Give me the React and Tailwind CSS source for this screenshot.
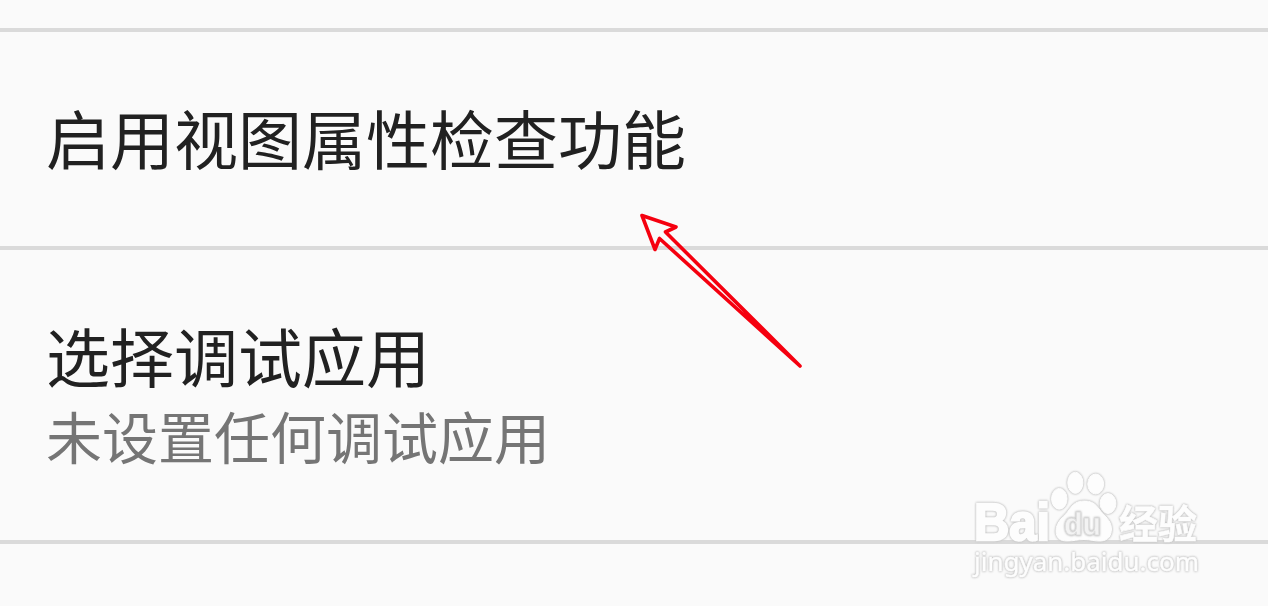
function PreferenceItem({ title, summary, className }) {
  return (
    <div className={`border-b-4 border-[#dadada] pl-[46px] ${className}`}>
      <div className="text-[64px] leading-[80px] text-[#212121]">{title}</div>
      {summary && (
        <div className="mt-px text-[56px] leading-[80px] text-[#757575]">{summary}</div>
      )}
    </div>
  )
}

// red hand-drawn style pointer
function Arrow() {
  return (
    <svg
      className="absolute left-[630px] top-[205px]"
      width="180"
      height="170"
      viewBox="630 205 180 170"
      fill="none"
      stroke="#f5000f"
      strokeWidth="3.6"
      strokeLinejoin="round"
    >
      <path d="M642 215.5L676 227L665.5 232L800 366L659.5 238.5L655 249.5Z" />
    </svg>
  )
}

// white glyphs, each with its own soft grey rim
function Watermark() {
  return (
    <svg
      className="absolute left-[960px] top-[460px] *:[filter:drop-shadow(0_0_0.8px_#b4b4b4)_drop-shadow(0_0_0.5px_#ddd)]"
      width="250"
      height="130"
      viewBox="960 460 250 130"
      fill="#fdfdfd"
      stroke="#fdfdfd"
      strokeLinejoin="miter"
    >
      <text x="974" y="540" strokeWidth="2.4" textLength="76" lengthAdjust="spacingAndGlyphs" className="font-['Liberation_Sans'] text-[52px] leading-none font-bold">
        Bai
      </text>
      <ellipse cx="1059.3" cy="498.8" rx="7.8" ry="10.4" />
      <ellipse cx="1075.3" cy="482.8" rx="7.6" ry="10.6" />
      <ellipse cx="1095.7" cy="484" rx="8" ry="10" />
      <ellipse cx="1108" cy="503.5" rx="8" ry="10" />
      <path d="M1084 501C1077 501 1073 504 1069 510C1065 516 1056 521 1056 531C1056 538 1060 541 1067 541C1074 541 1077 539.500 1084 539.500C1091 539.500 1095 541.500 1101 541C1108 540.500 1111.500 536 1111.500 529C1111.500 520 1104 516 1099 509C1095 503 1091 501 1084 501Z" />
      <text x="1064" y="535" fill="#f3f3f3" stroke="#dedede" strokeWidth="1" textLength="37" lengthAdjust="spacingAndGlyphs" className="font-['Liberation_Sans'] text-[31px] font-bold">
        du
      </text>
      <text x="1119" y="537.5" strokeWidth="0.6" textLength="78" lengthAdjust="spacingAndGlyphs" className="font-['Noto_Sans_CJK_SC',sans-serif] text-[39px] font-bold">
        经验
      </text>
      <text x="974" y="571" strokeWidth="0.5" textLength="225" lengthAdjust="spacingAndGlyphs" className="font-['Noto_Sans'] text-[26px]">
        jingyan.baidu.com
      </text>
    </svg>
  )
}

export default function App() {
  return (
    <div className="relative h-[606px] w-[1268px] overflow-hidden bg-[#fafafa] font-['Noto_Sans_CJK_SC',sans-serif]">
      <div className="h-8 border-b-4 border-[#dadada]" />
      <PreferenceItem title="启用视图属性检查功能" className="h-[218px] pt-[64px]" />
      <PreferenceItem
        title="选择调试应用"
        summary="未设置任何调试应用"
        className="h-[294px] pt-[64px]"
      />
      <Arrow />
      <Watermark />
    </div>
  )
}
